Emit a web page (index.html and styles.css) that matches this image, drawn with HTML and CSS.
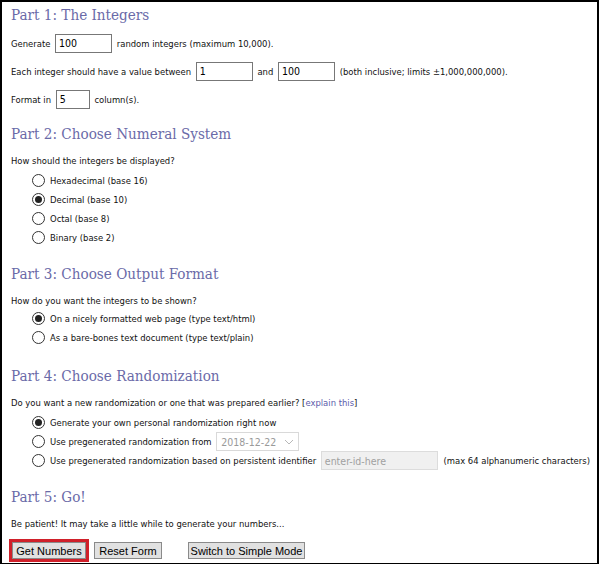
FILE: index.html
```html
<!DOCTYPE html>
<html>
<head>
<meta charset="utf-8">
<link rel="stylesheet" href="styles.css">
</head>
<body>
<div class="frame">
  <h2 class="part">Part 1: The Integers</h2>
  <p class="row">Generate <input class="num w56" type="text" value="100"> random integers (maximum 10,000).</p>
  <p class="row">Each integer should have a value between <input class="num w56" type="text" value="1"> and <input class="num w56" type="text" value="100"> (both inclusive; limits ±1,000,000,000).</p>
  <p class="row">Format in <input class="num w33" type="text" value="5"> column(s).</p>

  <h2 class="part sp">Part 2: Choose Numeral System</h2>
  <p class="q">How should the integers be displayed?</p>
  <div class="opts">
    <label class="opt"><span class="radio"></span>Hexadecimal (base 16)</label>
    <label class="opt"><span class="radio on"></span>Decimal (base 10)</label>
    <label class="opt"><span class="radio"></span>Octal (base 8)</label>
    <label class="opt"><span class="radio"></span>Binary (base 2)</label>
  </div>

  <h2 class="part">Part 3: Choose Output Format</h2>
  <p class="q">How do you want the integers to be shown?</p>
  <div class="opts o2">
    <label class="opt"><span class="radio on"></span>On a nicely formatted web page (type text/html)</label>
    <label class="opt"><span class="radio"></span>As a bare-bones text document (type text/plain)</label>
  </div>

  <h2 class="part">Part 4: Choose Randomization</h2>
  <p class="q">Do you want a new randomization or one that was prepared earlier? [<a class="link" href="#">explain this</a>]</p>
  <div class="opts">
    <label class="opt"><span class="radio on"></span>Generate your own personal randomization right now</label>
    <label class="opt"><span class="radio"></span>Use pregenerated randomization from <span class="select">2018-12-22<svg class="chev" width="10" height="6" viewBox="0 0 10 6"><path d="M1 1 L5 5 L9 1" fill="none" stroke="#b8b8b8" stroke-width="1"/></svg></span></label>
    <label class="opt"><span class="radio"></span>Use pregenerated randomization based on persistent identifier <span class="idbox">enter-id-here</span> (max 64 alphanumeric characters)</label>
  </div>

  <h2 class="part">Part 5: Go!</h2>
  <p class="q">Be patient! It may take a little while to generate your numbers...</p>
  <div class="buttons">
    <span class="hl"><span class="btn b1">Get Numbers</span></span>
    <span class="btn b2">Reset Form</span>
    <span class="btn b3">Switch to Simple Mode</span>
  </div>
</div>
</body>
</html>
```

FILE: styles.css
```css
html, body {
  margin: 0;
  padding: 0;
  background: #fff;
}
.frame {
  box-sizing: border-box;
  width: 599px;
  height: 564px;
  border: 2px solid #000;
  border-bottom-width: 1px;
  padding: 2px 0 0 9px;
  font-family: "DejaVu Sans Condensed", "DejaVu Sans", sans-serif;
  font-stretch: condensed;
  font-size: 9.4px;
  color: #111;
  overflow: hidden;
}
.part {
  margin: 0;
  font-family: "DejaVu Serif Condensed", "DejaVu Serif", serif;
  font-stretch: condensed;
  font-weight: normal;
  font-size: 15.1px;
  color: #6a6aa8;
  height: 22px;
  line-height: 22px;
}
.part.sp { margin-top: 13px; }
.row {
  margin: 6px 0 0;
  height: 22px;
  display: flex;
  align-items: center;
  white-space: pre;
}
.num {
  box-sizing: border-box;
  height: 19px;
  border: 1px solid #777;
  padding: 0 3px;
  font-family: "DejaVu Sans Condensed", "DejaVu Sans", sans-serif;
  font-stretch: condensed;
  font-size: 10.5px;
  color: #000;
  margin: 0 2px;
}
.w56 { width: 57px; }
.w33 { width: 34px; }
.q {
  margin: 9px 0 0;
  line-height: 14px;
}
.opts {
  display: flex;
  flex-direction: column;
  padding-left: 21px;
  margin-top: 3px;
  margin-bottom: 16px;
}
.opts.o2 { margin-top: 1px; margin-bottom: 18px; }
.opt {
  display: flex;
  align-items: center;
  height: 19px;
  white-space: pre;
}
.radio {
  box-sizing: border-box;
  width: 13px;
  height: 13px;
  border: 1px solid #333;
  border-radius: 50%;
  margin-right: 5px;
  position: relative;
  background: #fff;
}
.radio.on::after {
  content: "";
  position: absolute;
  left: 2px;
  top: 2px;
  width: 7px;
  height: 7px;
  border-radius: 50%;
  background: #222;
}
.link { color: #5b5bab; text-decoration: none; }
.select {
  box-sizing: border-box;
  display: inline-flex;
  align-items: center;
  justify-content: space-between;
  width: 83px;
  height: 19px;
  border: 1px solid #d9d9d9;
  padding: 0 4px;
  color: #9a9a9a;
  font-size: 10.5px;
  margin-left: 2px;
}
.idbox {
  box-sizing: border-box;
  display: inline-flex;
  align-items: center;
  width: 117px;
  height: 19px;
  border: 1px solid #dcdcdc;
  background: #f0f0f0;
  padding: 0 3px;
  color: #a0a0a0;
  font-size: 10.5px;
  margin: 0 3px 0 2px;
}
.buttons {
  display: flex;
  align-items: center;
  margin-top: 8px;
  margin-left: -2px;
  gap: 5px;
}
.hl {
  border: 3px solid #d0202a;
  display: inline-flex;
}
.btn {
  box-sizing: border-box;
  display: inline-flex;
  align-items: center;
  justify-content: center;
  height: 17px;
  border: 1px solid #8a8a8a;
  background: #e1e1e1;
  font-family: "Liberation Sans", Arial, sans-serif;
  font-size: 11px;
  color: #000;
}
.b1 { width: 74px; }
.b2 { width: 68px; }
.b3 { width: 117px; margin-left: 21px; }
```
